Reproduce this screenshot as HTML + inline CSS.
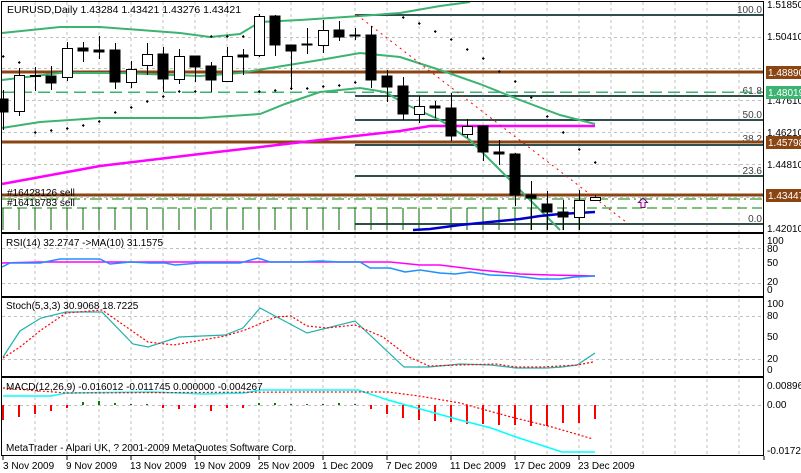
<!DOCTYPE html>
<html><head><meta charset="utf-8"><style>
html,body{margin:0;padding:0;background:#fff;width:801px;height:473px;overflow:hidden}
svg{display:block;font-family:"Liberation Sans",sans-serif;font-size:10px}
</style></head><body>
<svg width="801" height="473" viewBox="0 0 801 473" shape-rendering="crispEdges">
<rect width="801" height="473" fill="#fff"/>
<g stroke="#c0c0c0" stroke-dasharray="3,3" stroke-width="1">
<path d="M35 2V232M67 2V232M99 2V232M131 2V232M163 2V232M195 2V232M227 2V232M259 2V232M291 2V232M323 2V232M355 2V232M387 2V232M419 2V232M451 2V232M483 2V232M515 2V232M547 2V232M579 2V232M611 2V232M643 2V232M675 2V232M707 2V232M739 2V232"/>
<path d="M2 37.5H763M2 68.5H763M2 100.5H763M2 132.5H763M2 164.5H763M2 197.5H763"/>
<path d="M35 235V296M67 235V296M99 235V296M131 235V296M163 235V296M195 235V296M227 235V296M259 235V296M291 235V296M323 235V296M355 235V296M387 235V296M419 235V296M451 235V296M483 235V296M515 235V296M547 235V296M579 235V296M611 235V296M643 235V296M675 235V296M707 235V296M739 235V296"/>
<path d="M35 299V376M67 299V376M99 299V376M131 299V376M163 299V376M195 299V376M227 299V376M259 299V376M291 299V376M323 299V376M355 299V376M387 299V376M419 299V376M451 299V376M483 299V376M515 299V376M547 299V376M579 299V376M611 299V376M643 299V376M675 299V376M707 299V376M739 299V376"/>
<path d="M35 379V455M67 379V455M99 379V455M131 379V455M163 379V455M195 379V455M227 379V455M259 379V455M291 379V455M323 379V455M355 379V455M387 379V455M419 379V455M451 379V455M483 379V455M515 379V455M547 379V455M579 379V455M611 379V455M643 379V455M675 379V455M707 379V455M739 379V455"/>
<path d="M2 248.5H763M2 283.5H763M2 316.5H763M2 359.5H763M2 405.5H763"/>
</g>
<g stroke="#2f4f4f" stroke-width="2">
<path d="M355 15H763M355 96H763M355 120H763M355 145H763M355 176H763M355 224H763"/>
</g>
<g fill="#404040" font-size="10" text-anchor="end">
<text x="762" y="13">100.0</text><text x="762" y="94">61.8</text><text x="762" y="118">50.0</text><text x="762" y="142">38.2</text><text x="762" y="174">23.6</text><text x="762" y="222">0.0</text>
</g>
<g stroke="#8b4513" stroke-width="3"><path d="M2 72H763M2 142H763M2 195H763"/></g>
<path d="M2 92H763" stroke="#3cb371" stroke-width="1.5" stroke-dasharray="12,6"/>
<path d="M2 199H763" stroke="#008000" stroke-dasharray="12,4,2,4"/>
<path d="M2 208H763" stroke="#008000" stroke-dasharray="10,5"/>
<g stroke="#006400"><path d="M3 208V230M19 208V230M35 208V230M51 208V230M67 208V230M83 208V230M99 208V230M115 208V230M131 208V230M147 208V230M163 208V230M179 208V230M195 208V230M211 208V230M227 208V230M243 208V230M259 208V230M275 208V230M291 208V230M307 208V230M323 208V230M339 208V230M355 208V230M371 208V230M387 208V230M403 208V230M419 208V230M451 208V230M467 208V230M483 208V230M499 208V230M515 208V230M531 208V230M547 208V230M563 208V230M579 208V230"/></g>
<g fill="none" stroke="#3cb371" stroke-width="2" shape-rendering="auto">
<path d="M2 33L60 27L100 27L180 33L210 37L240 34L260 22L300 20L360 16L400 13L440 6L470 2"/>
<path d="M2 80L60 73L120 73L200 76L240 73L270 68L320 60L360 53L400 57L440 70L480 84L520 100L560 115L595 124"/>
<path d="M2 128L40 122L100 118L200 118L260 114L285 104L320 92L360 88L385 92L405 104L440 120L470 140L500 170L520 190L545 215L560 230"/>
</g>
<path d="M2 184L100 166L200 154L320 140L400 131L430 126L595 126" fill="none" stroke="#ff00ff" stroke-width="2.5" shape-rendering="auto"/>
<path d="M413 230L430 229L460 225L480 223L500 221L520 219L540 216L560 214L595 212" fill="none" stroke="#0000cd" stroke-width="2.5" shape-rendering="auto"/>
<path d="M357 15L626 222" stroke="#ff0000" stroke-dasharray="2,4" shape-rendering="auto"/>
<g fill="#000"><path d="M3 55l1.5 1.5-1.5 1.5-1.5-1.5zM19 61l1.5 1.5-1.5 1.5-1.5-1.5zM35 131l1.5 1.5-1.5 1.5-1.5-1.5zM51 129l1.5 1.5-1.5 1.5-1.5-1.5zM67 127l1.5 1.5-1.5 1.5-1.5-1.5zM83 124l1.5 1.5-1.5 1.5-1.5-1.5zM99 120l1.5 1.5-1.5 1.5-1.5-1.5zM115 111l1.5 1.5-1.5 1.5-1.5-1.5zM131 106l1.5 1.5-1.5 1.5-1.5-1.5zM147 100l1.5 1.5-1.5 1.5-1.5-1.5zM163 95l1.5 1.5-1.5 1.5-1.5-1.5zM179 90l1.5 1.5-1.5 1.5-1.5-1.5zM195 90l1.5 1.5-1.5 1.5-1.5-1.5zM211 35l1.5 1.5-1.5 1.5-1.5-1.5zM227 35l1.5 1.5-1.5 1.5-1.5-1.5zM243 35l1.5 1.5-1.5 1.5-1.5-1.5zM259 90l1.5 1.5-1.5 1.5-1.5-1.5zM275 89l1.5 1.5-1.5 1.5-1.5-1.5zM291 87l1.5 1.5-1.5 1.5-1.5-1.5zM307 87l1.5 1.5-1.5 1.5-1.5-1.5zM323 85l1.5 1.5-1.5 1.5-1.5-1.5zM339 84l1.5 1.5-1.5 1.5-1.5-1.5zM355 81l1.5 1.5-1.5 1.5-1.5-1.5zM403 16l1.5 1.5-1.5 1.5-1.5-1.5zM419 22l1.5 1.5-1.5 1.5-1.5-1.5zM435 30l1.5 1.5-1.5 1.5-1.5-1.5zM451 38l1.5 1.5-1.5 1.5-1.5-1.5zM467 48l1.5 1.5-1.5 1.5-1.5-1.5zM483 57l1.5 1.5-1.5 1.5-1.5-1.5zM499 70l1.5 1.5-1.5 1.5-1.5-1.5zM515 80l1.5 1.5-1.5 1.5-1.5-1.5zM531 96l1.5 1.5-1.5 1.5-1.5-1.5zM547 115l1.5 1.5-1.5 1.5-1.5-1.5zM563 131l1.5 1.5-1.5 1.5-1.5-1.5zM579 148l1.5 1.5-1.5 1.5-1.5-1.5zM595 161l1.5 1.5-1.5 1.5-1.5-1.5z"/></g>
<g stroke="#000" stroke-width="1">
<path d="M3.5 90V130M19.5 68V116M35.5 67V91M51.5 66V90M67.5 42V81M83.5 42V62M99.5 36V59M115.5 43V89M131.5 61V88M147.5 43V75M163.5 47V92M179.5 49V84M195.5 56V82M211.5 62V92M227.5 47V81M243.5 49V75M259.5 14V57M275.5 15V56M291.5 45V90M307.5 28V54M323.5 20V53M339.5 21V41M355.5 28V40M371.5 26V88M387.5 70V102M403.5 77V120M419.5 96V123M435.5 101V118M451.5 93V141M467.5 119V138M483.5 126V161M499.5 140V165M515.5 153V206M531.5 181V230M547.5 191V230M563.5 200V230M579.5 190V230M595.5 195V201"/>
</g>
<g stroke="#000" fill="#000">
<rect x="0" y="99" width="8" height="13"/><rect x="46" y="76" width="10" height="7"/><rect x="78" y="48" width="10" height="3"/><rect x="94" y="50" width="10" height="2"/><rect x="110" y="50" width="10" height="32"/><rect x="158" y="54" width="10" height="25"/><rect x="190" y="56" width="10" height="11"/><rect x="206" y="66" width="10" height="14"/><rect x="238" y="55" width="10" height="2"/><rect x="270" y="16" width="10" height="29"/><rect x="286" y="45" width="10" height="6"/><rect x="302" y="44" width="10" height="1"/><rect x="334" y="30" width="10" height="7"/><rect x="350" y="35" width="10" height="1"/><rect x="366" y="35" width="10" height="45"/><rect x="382" y="76" width="10" height="11"/><rect x="398" y="86" width="10" height="28"/><rect x="430" y="106" width="10" height="2"/><rect x="446" y="108" width="10" height="28"/><rect x="478" y="126" width="10" height="26"/><rect x="494" y="152" width="10" height="2"/><rect x="510" y="154" width="10" height="41"/><rect x="526" y="195" width="10" height="3"/><rect x="542" y="204" width="10" height="8"/><rect x="558" y="212" width="10" height="5"/>
</g>
<g stroke="#000" fill="#fff">
<rect x="14.5" y="75.5" width="10" height="36"/><rect x="30.5" y="75.5" width="10" height="1"/><rect x="62.5" y="48.5" width="10" height="29"/><rect x="126.5" y="69.5" width="10" height="13"/><rect x="142.5" y="54.5" width="10" height="11"/><rect x="174.5" y="56.5" width="10" height="23"/><rect x="222.5" y="56.5" width="10" height="25"/><rect x="254.5" y="16.5" width="10" height="39"/><rect x="318.5" y="30.5" width="10" height="15"/><rect x="414.5" y="106.5" width="10" height="8"/><rect x="462.5" y="126.5" width="10" height="8"/><rect x="574.5" y="200.5" width="10" height="17"/><rect x="590.5" y="197.5" width="10" height="3"/>
</g>
<path d="M643 198l-4.5 4.5h2.5v5h4v-5h2.5z" fill="none" stroke="#800080" shape-rendering="auto"/>
<g fill="#000" font-size="10">
<text x="7" y="13" font-size="10.5">EURUSD,Daily  1.43284 1.43421 1.43276 1.43421</text>
<text x="7" y="196">#16428126 sell</text>
<text x="7" y="206">#16418783 sell</text>
</g>
<g fill="#000" font-size="10">
<text x="767" y="8">1.51850</text><text x="767" y="40">1.50410</text><text x="767" y="104">1.47610</text><text x="767" y="136">1.46210</text><text x="767" y="168">1.44810</text><text x="767" y="232">1.42010</text>
</g>
<rect x="766" y="66" width="35" height="13" fill="#8b4513"/><text x="768" y="76" fill="#fff">1.48890</text>
<rect x="766" y="86" width="35" height="13" fill="#3cb371"/><text x="768" y="96" fill="#fff">1.48019</text>
<rect x="766" y="136" width="35" height="13" fill="#8b4513"/><text x="768" y="146" fill="#fff">1.45798</text>
<rect x="766" y="189" width="35" height="13" fill="#8b4513"/><text x="768" y="199" fill="#fff">1.43447</text>
<g fill="none" stroke="#000"><rect x="1.5" y="1.5" width="762" height="231"/><rect x="1.5" y="233.5" width="762" height="63"/><rect x="1.5" y="297.5" width="762" height="79"/><rect x="1.5" y="377.5" width="762" height="78"/></g>
<g fill="none" shape-rendering="auto">
<path d="M2 263L40 262L100 262L200 262L255 262L290 262L320 262L390 262L420 265L440 265L480 270L520 274L550 275L595 276" stroke="#ff00ff" stroke-width="1.5"/>
<path d="M2 267L10 263L40 263L60 259L100 259L110 264L130 262L150 263L165 263L175 265L200 263L215 263L240 263L258 258L270 262L300 262L320 261L340 262L360 262L370 268L390 268L405 272L420 270L440 273L455 274L470 272L490 275L515 276L540 279L560 279L575 277L595 276" stroke="#1e90ff" stroke-width="1.5"/>
</g>
<g font-size="10" fill="#000"><text x="6" y="246">RSI(14) 32.2747  -&gt;MA(10) 31.1575</text>
<text x="767" y="244">100</text><text x="767" y="252">80</text><text x="767" y="266">50</text><text x="767" y="285">20</text><text x="767" y="293">0</text></g>
<g fill="none" shape-rendering="auto">
<polyline stroke="#20b2aa" stroke-width="1.2" points="3,357 20,331 41,318 66,312 102,312 133,344 148,347 179,337 225,335 243,328 260,308 307,333 355,321 404,367 429,367 460,364 491,365 516,368 547,368 562,367 577,365 595,353"/>
<polyline stroke="#ff0000" stroke-dasharray="2,2" stroke-width="1.2" points="3,358 20,347 41,330 66,313 102,310 148,342 174,345 225,336 245,330 276,317 291,316 307,326 327,328 355,325 383,337 409,357 429,366 460,365 496,364 516,367 542,367 577,365 593,362"/>
</g>
<g font-size="10" fill="#000"><text x="6" y="309">Stoch(5,3,3) 30.9068 18.7225</text>
<text x="767" y="307">100</text><text x="767" y="319">80</text><text x="767" y="340">50</text><text x="767" y="362">20</text><text x="767" y="373">0</text></g>
<g stroke="#ff0000" stroke-width="2"><path d="M3 405V420M19 405V417M35 405V414M51 405V411M67 405V408M163 405V408M179 405V409M195 405V408M211 405V411M227 405V408M243 405V408M371 405V409M387 405V414M403 405V418M419 405V420M435 405V421M451 405V422M467 405V424M483 405V424M499 405V425M515 405V425M531 405V426M547 405V426M563 405V423M579 405V423M595 405V419"/></g>
<g stroke="#008000" stroke-width="2"><path d="M83 402V405M99 401V405M115 403V405M131 404V405M147 404V405M259 403V405M275 403V405M291 404V405M307 404V405M323 404V405M339 403V405M355 404V405"/></g>
<g fill="none" shape-rendering="auto">
<polyline stroke="#00ffff" stroke-width="1.5" points="3,396 51,396 66,393 153,392 204,394 245,393 260,390 358,390 388,400 460,420 491,428 516,437 562,452 595,452"/>
<polyline stroke="#ff0000" stroke-dasharray="2,2" stroke-width="1.2" points="3,388 66,393 307,392 358,392 388,392 419,396 460,403 511,417 552,427 593,439"/>
</g>
<g font-size="10" fill="#000"><text x="6" y="390">MACD(12,26,9) -0.016012 -0.011745 0.000000 -0.004267</text>
<text x="6" y="451">MetaTrader - Alpari UK, ? 2001-2009 MetaQuotes Software Corp.</text>
<text x="767" y="389">0.00896</text><text x="767" y="408">0.00</text><text x="767" y="454">-0.01724</text></g>
<g stroke="#000"><path d="M3 456V460M67 456V460M131 456V460M195 456V460M259 456V460M323 456V460M387 456V460M451 456V460M515 456V460M579 456V460M764 456V460"/></g>
<g font-size="10" fill="#000">
<text x="3" y="469">3 Nov 2009</text><text x="66" y="469">9 Nov 2009</text><text x="130" y="469">13 Nov 2009</text><text x="194" y="469">19 Nov 2009</text><text x="258" y="469">25 Nov 2009</text><text x="322" y="469">1 Dec 2009</text><text x="386" y="469">7 Dec 2009</text><text x="450" y="469">11 Dec 2009</text><text x="514" y="469">17 Dec 2009</text><text x="578" y="469">23 Dec 2009</text>
</g>
</svg>
</body></html>
